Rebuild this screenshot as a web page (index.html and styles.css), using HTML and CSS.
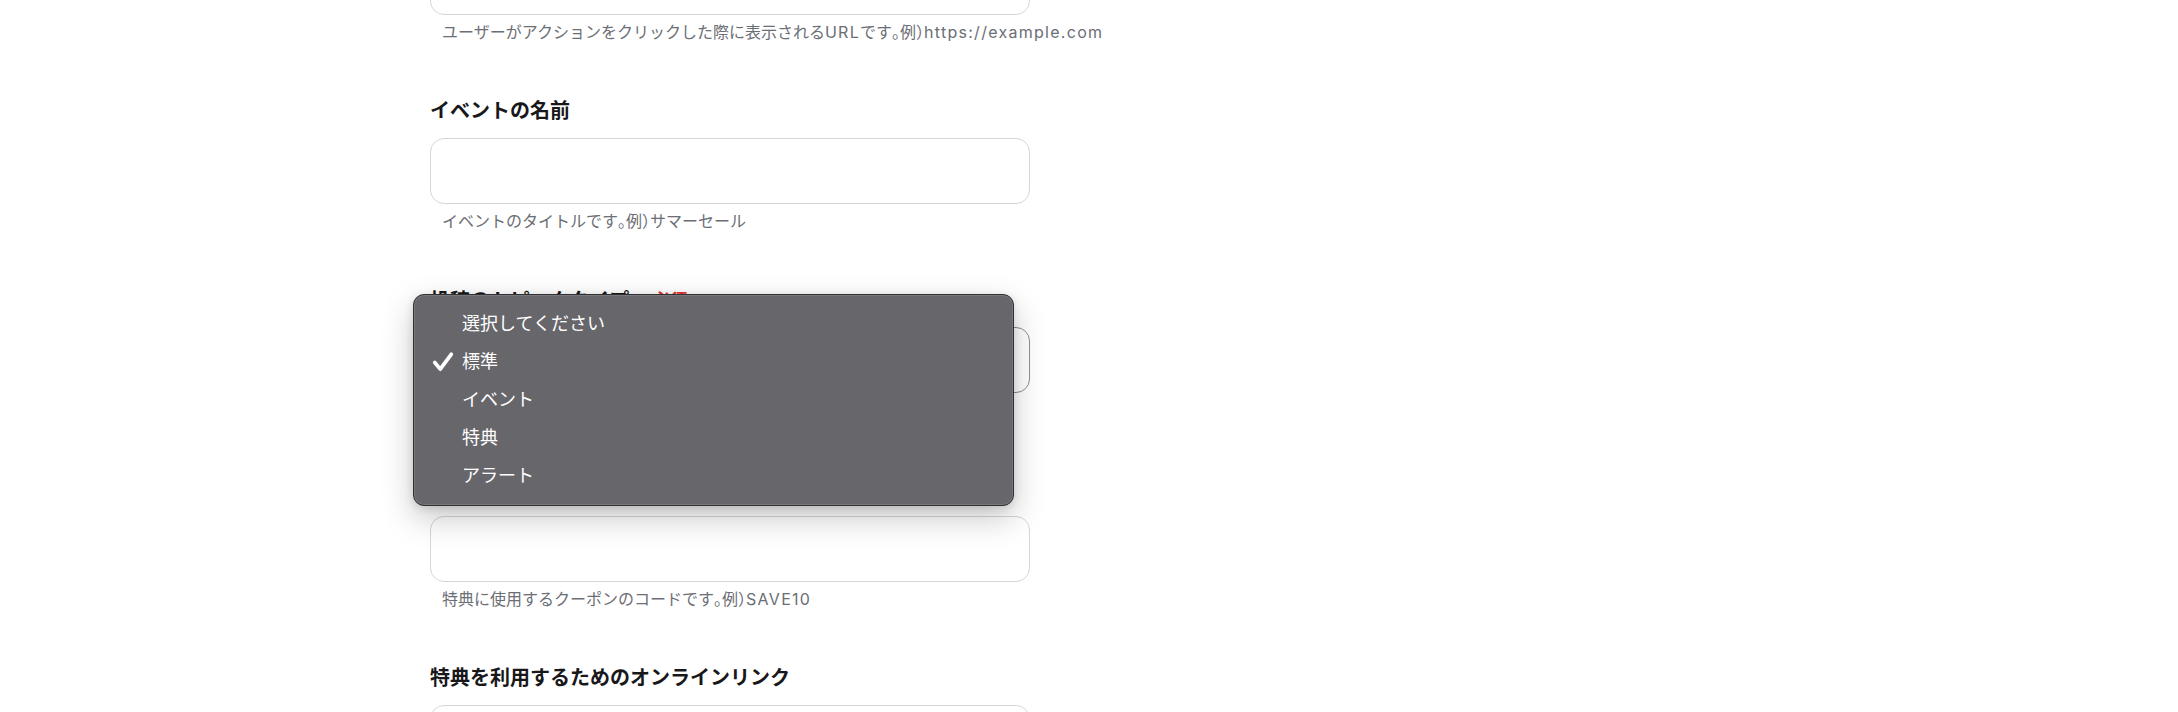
FILE: index.html
```html
<!DOCTYPE html>
<html lang="ja">
<head>
<meta charset="utf-8">
<title>投稿フォーム</title>
<link rel="stylesheet" href="styles.css">
</head>
<body>
<main class="form">
  <div class="field">
    <div class="label">アクションのURL</div>
    <div class="input"></div>
    <div class="help">ユーザーがアクションをクリックした際に表示される<span class="lat">URL</span>です<span class="hw">。</span>例<span class="hw">）</span><span class="lat">https://example.com</span></div>
  </div>
  <div class="field">
    <div class="label">イベントの名前</div>
    <div class="input"></div>
    <div class="help">イベントのタイトルです<span class="hw">。</span>例<span class="hw">）</span>サマーセール</div>
  </div>
  <div class="field field-select">
    <div class="label">投稿のトピックタイプ<span class="req">必須</span></div>
    <div class="input select">標準</div>
    <div class="help">投稿の種類を選択してください<span class="hw">。</span></div>
    <div class="menu">
      <div class="opt">選択してください</div>
      <div class="opt checked"><svg class="check" viewBox="0 0 20 20" width="22" height="22"><path d="M2.5 10.5 L7.5 16.5 L17.5 3" fill="none" stroke="#fff" stroke-width="3.4" stroke-linecap="round" stroke-linejoin="round"/></svg>標準</div>
      <div class="opt">イベント</div>
      <div class="opt">特典</div>
      <div class="opt">アラート</div>
    </div>
  </div>
  <div class="field">
    <div class="label">クーポンコード</div>
    <div class="input"></div>
    <div class="help">特典に使用するクーポンのコードです<span class="hw">。</span>例<span class="hw">）</span><span class="lat">SAVE10</span></div>
  </div>
  <div class="field">
    <div class="label">特典を利用するためのオンラインリンク</div>
    <div class="input"></div>
    <div class="help">特典を利用できるページの<span class="lat">URL</span>です<span class="hw">。</span></div>
  </div>
</main>
</body>
</html>
```

FILE: styles.css
```css
html, body {
  margin: 0;
  padding: 0;
  background: #ffffff;
  overflow: hidden;
}
body {
  font-family: Inter, "Noto Sans CJK JP", sans-serif;
  color: #1b1b1f;
}
.form {
  margin-top: -92px;
  padding-left: 430px;
  width: 600px;
  display: flex;
  flex-direction: column;
  gap: 54px;
}
.field {
  display: flex;
  flex-direction: column;
}
.field-select {
  position: relative;
}
.label {
  font-size: 20px;
  font-weight: 700;
  line-height: 28px;
  height: 28px;
  margin-bottom: 13px;
  color: #18181b;
  white-space: nowrap;
}
.req {
  color: #e3342f;
  font-size: 17px;
  font-weight: 700;
  margin-left: 24px;
  vertical-align: 2px;
}
.input {
  height: 64px;
  border: 1px solid #d3d6db;
  border-radius: 14px;
  background: #fff;
}
.select {
  border-color: #8e8e93;
  font-size: 18px;
  line-height: 64px;
  padding-left: 16px;
}
.help {
  margin-top: 6px;
  padding-left: 12px;
  font-size: 16px;
  line-height: 22px;
  color: #6b6e74;
  white-space: nowrap;
}
.hw {
  font-feature-settings: "halt";
}
.lat {
  letter-spacing: 0.08em;
}
.menu {
  position: absolute;
  left: -17px;
  top: 8px;
  width: 599px;
  padding: 10px 0 10px;
  background: #67666b;
  border: 1px solid #303033;
  border-radius: 11px;
  box-shadow: inset 0 0 0 1px rgba(255,255,255,0.12), 0 12px 32px rgba(0,0,0,0.22), 0 2px 8px rgba(0,0,0,0.12);
}
.opt {
  position: relative;
  height: 38px;
  line-height: 38px;
  padding-left: 48px;
  font-size: 18px;
  color: #ffffff;
}
.check {
  position: absolute;
  left: 18px;
  top: 8px;
}
```
